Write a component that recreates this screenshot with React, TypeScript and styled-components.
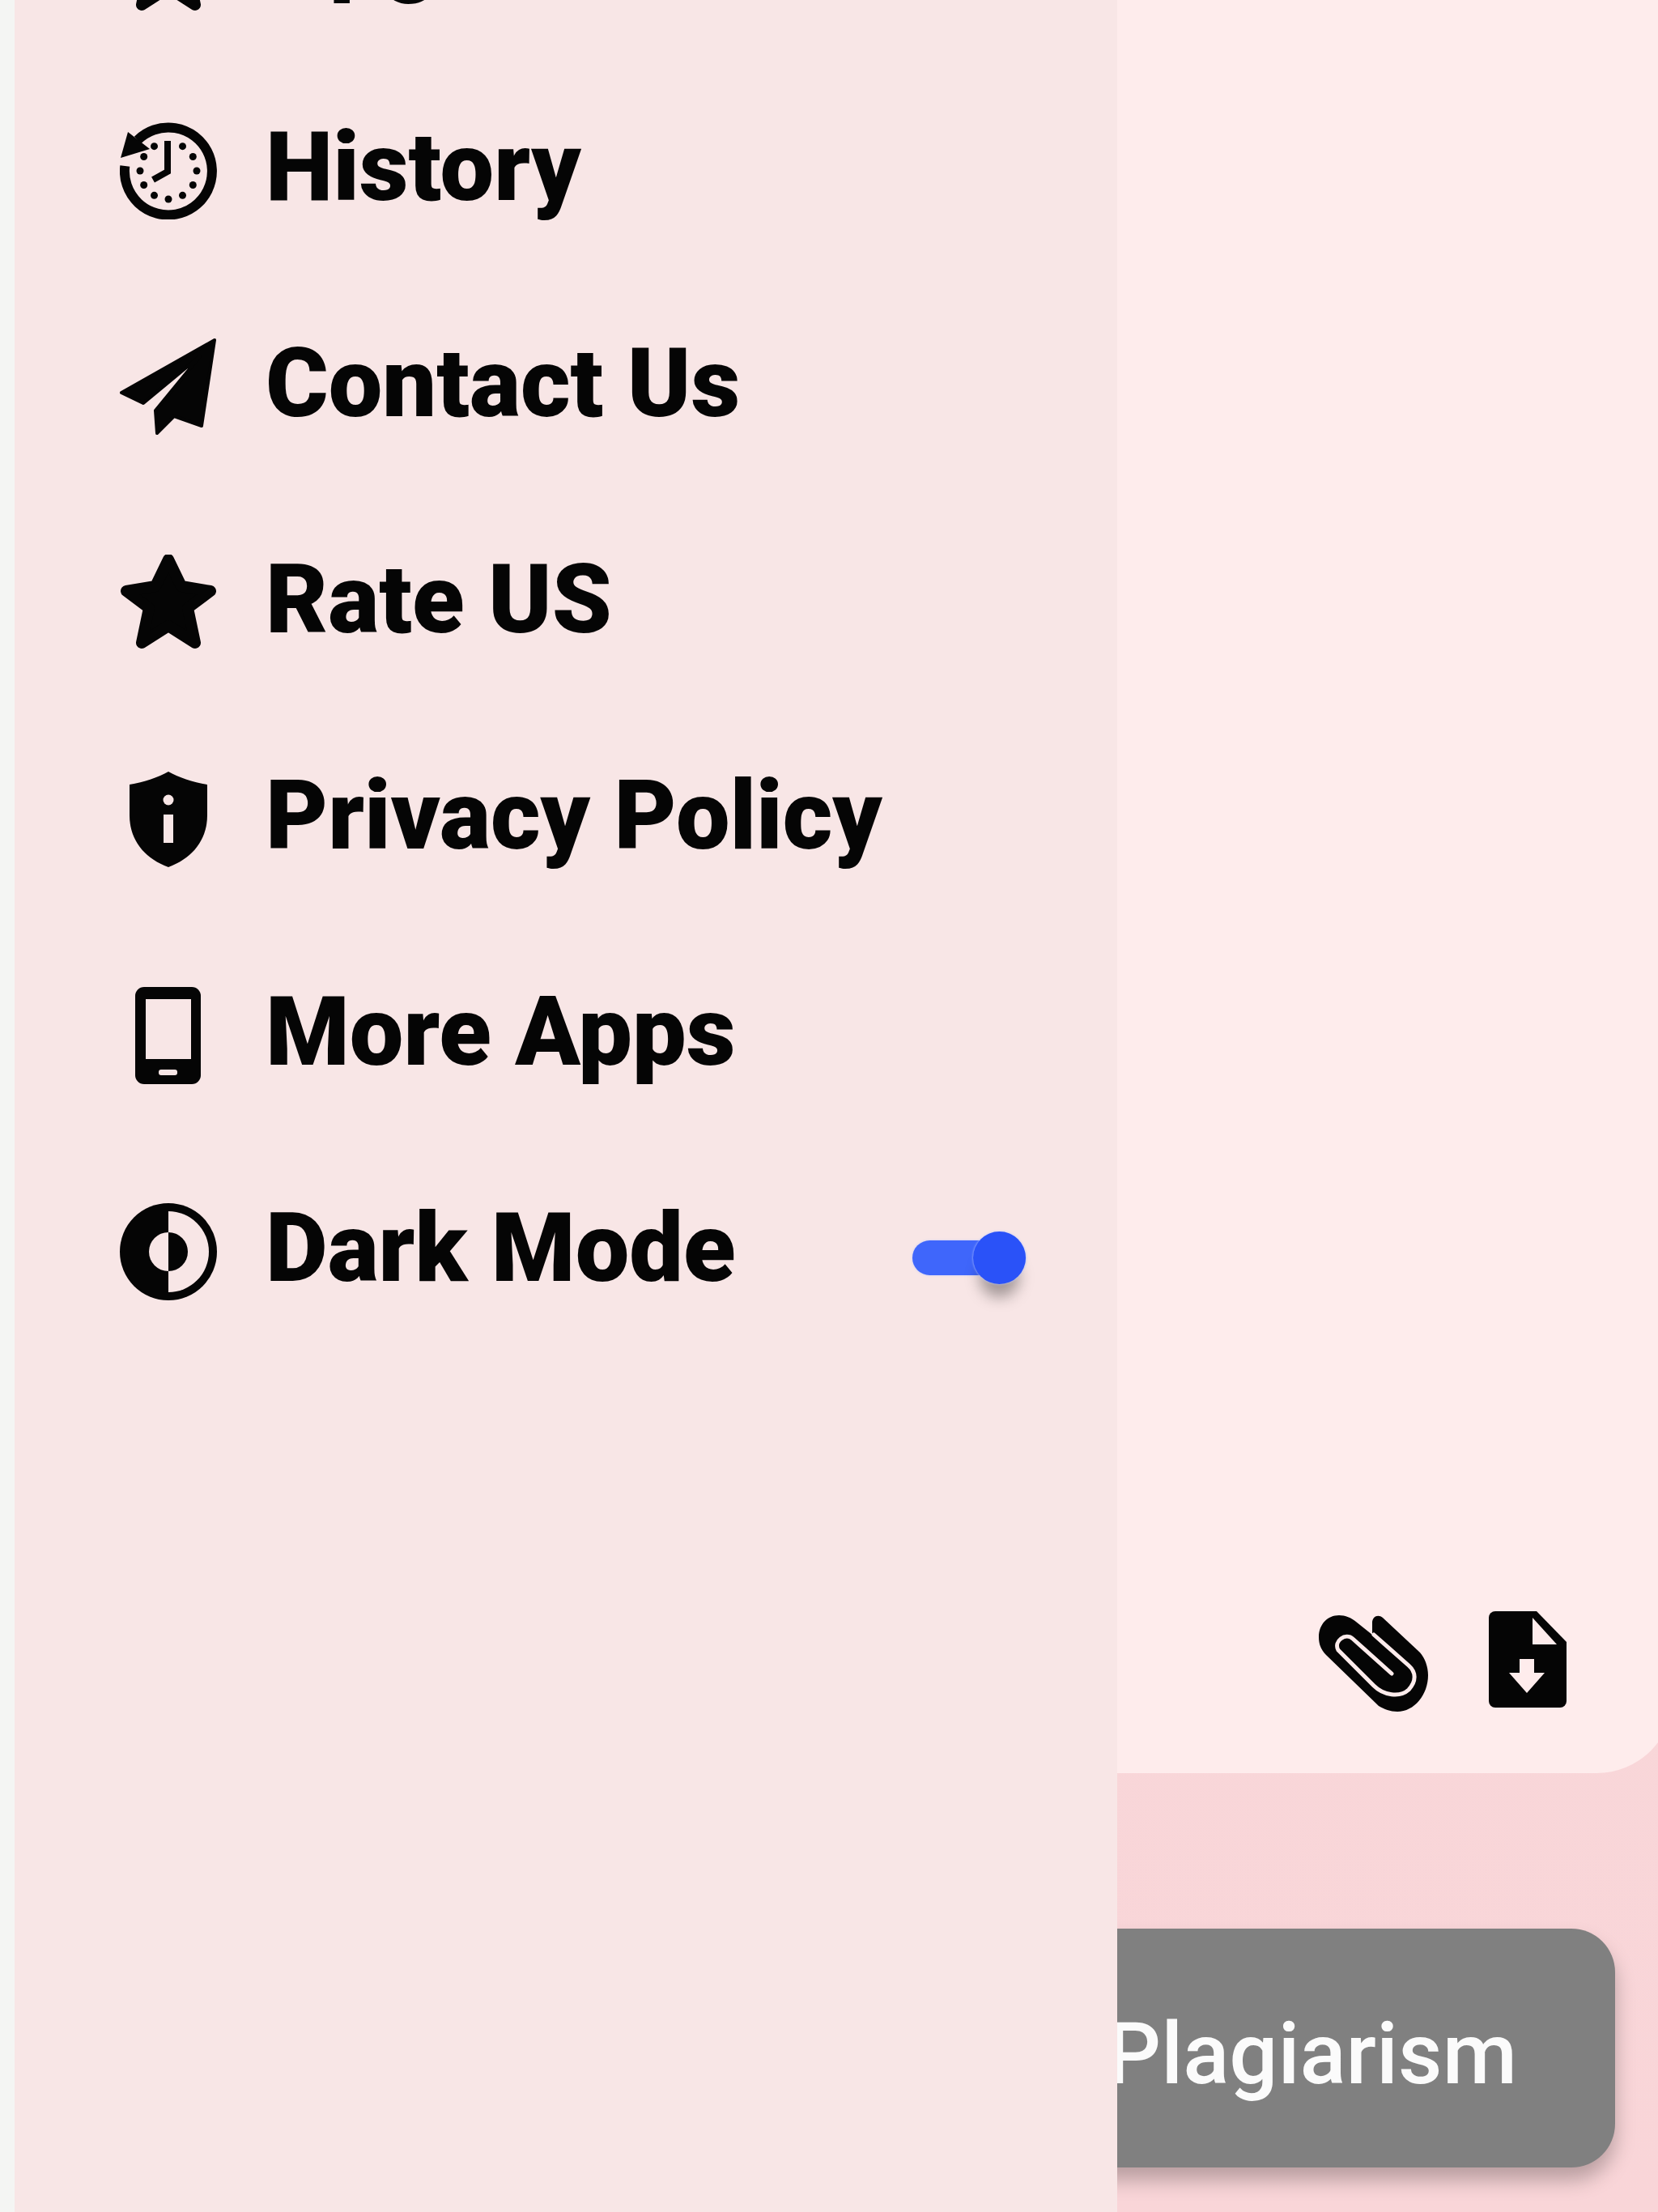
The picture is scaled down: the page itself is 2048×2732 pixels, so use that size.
import React from 'react'
import styled, { createGlobalStyle } from 'styled-components'

const GlobalStyle = createGlobalStyle`
  html, body {
    margin: 0;
    padding: 0;
    background: #f4f5f3;
  }
`

function HistoryIcon() {
  const dots = Array.from({ length: 12 }, (_, i) => i * 30).filter((deg) => deg !== 0)
  return (
    <svg viewBox="0 -2 120 120" width="120" height="120">
      <path d="M6.3 52 A54 54 0 1 0 22 20" fill="none" stroke="#050505" strokeWidth="12" />
      <polygon points="10,10 37,31 1,42" fill="#050505" />
      {dots.map((deg) => (
        <circle
          key={deg}
          cx={60 + 35 * Math.sin((deg * Math.PI) / 180)}
          cy={58 - 35 * Math.cos((deg * Math.PI) / 180)}
          r="4.5"
          fill="#050505"
        />
      ))}
      <path d="M59 21 V59 L41 69" fill="none" stroke="#050505" strokeWidth="8" />
    </svg>
  )
}

function PlaneIcon() {
  return (
    <svg viewBox="0 0 120 120" width="120" height="120">
      <path
        d="M117 2 L2 67 L29 80 L99 22 L44 89 L46 117 L67 96 L101 108 Z"
        fill="#050505"
        stroke="#050505"
        strokeWidth="4"
        strokeLinejoin="round"
      />
    </svg>
  )
}

function StarIcon() {
  return (
    <svg viewBox="0 2 120 120" width="120" height="120">
      <path
        d="M60 8 L76 41 L112 47 L84 68 L93 111 L60 90 L27 111 L36 68 L8 47 L44 41 Z"
        fill="#050505"
        stroke="#050505"
        strokeWidth="14"
        strokeLinejoin="round"
      />
    </svg>
  )
}

function ShieldIcon() {
  return (
    <svg viewBox="0 0 120 120" width="120" height="120">
      <path
        d="M60 1 C72 8 90 14 108 17 V55 C108 85 90 108 60 119 C30 108 12 85 12 55 V17 C30 14 48 8 60 1 Z"
        fill="#050505"
      />
      <circle cx="60" cy="36" r="6.5" fill="#f8e6e6" />
      <rect x="54" y="54" width="12" height="35" fill="#f8e6e6" />
    </svg>
  )
}

function PhoneIcon() {
  return (
    <svg viewBox="0 0 120 120" width="120" height="120">
      <rect x="19" y="0" width="81" height="120" rx="11" fill="#050505" />
      <rect x="32" y="15" width="56" height="74" fill="#f8e6e6" />
      <rect x="48" y="102" width="23" height="7" rx="3" fill="#f8e6e6" />
    </svg>
  )
}

function ContrastIcon() {
  return (
    <svg viewBox="0 0 120 120" width="120" height="120">
      <circle cx="60" cy="60" r="60" fill="#050505" />
      <path d="M60 10 A50 50 0 0 1 60 110 Z" fill="#f8e6e6" />
      <path d="M60 36 A24 24 0 0 1 60 84 Z" fill="#050505" />
      <path d="M60 36 A24 24 0 0 0 60 84 Z" fill="#f8e6e6" />
    </svg>
  )
}

function ClipIcon() {
  return (
    <svg viewBox="0 0 135 119" width="135" height="119">
      <path
        d="M0 27 C0 11 11 0 25 0 C33 0 40 3 46 8 L66 24 V9 C66 2 73 -2 79 3 L125 46 C131 53 135 63 135 74 C135 98 118 119 97 119 C88 119 81 116 74 112 L9 49 C3 43 0 36 0 27 Z"
        fill="#050505"
      />
      <path
        d="M90 72 L42 29 C33 21 18 32 24 43 L68 87 C80 99 100 102 111 92 C121 81 120 70 111 62 L68 24"
        fill="none"
        stroke="#feecec"
        strokeWidth="5"
        strokeLinecap="round"
      />
    </svg>
  )
}

function FileIcon() {
  return (
    <svg viewBox="0 0 96 119" width="96" height="119">
      <path
        d="M8 0 H59 L96 38 V111 A8 8 0 0 1 88 119 H8 A8 8 0 0 1 0 111 V8 A8 8 0 0 1 8 0 Z"
        fill="#050505"
      />
      <path d="M54 8 L84 41 H54 Z" fill="#feecec" />
      <path d="M38 59 H56 V76 H69 L47 101 L25 76 H38 Z" fill="#feecec" />
    </svg>
  )
}

function App() {
  return (
    <Screen>
      <GlobalStyle />
      <Strip />
      <Drawer>
        <MenuRow>
          <TopIconSlot><StarIcon /></TopIconSlot>
          <MenuLabel>Upgrade</MenuLabel>
        </MenuRow>
        <MenuRow>
          <IconSlot><HistoryIcon /></IconSlot>
          <MenuLabel>History</MenuLabel>
        </MenuRow>
        <MenuRow>
          <IconSlot><PlaneIcon /></IconSlot>
          <MenuLabel>Contact Us</MenuLabel>
        </MenuRow>
        <MenuRow>
          <IconSlot><StarIcon /></IconSlot>
          <MenuLabel>Rate US</MenuLabel>
        </MenuRow>
        <MenuRow>
          <IconSlot><ShieldIcon /></IconSlot>
          <MenuLabel>Privacy Policy</MenuLabel>
        </MenuRow>
        <MenuRow>
          <IconSlot><PhoneIcon /></IconSlot>
          <MenuLabel>More Apps</MenuLabel>
        </MenuRow>
        <MenuRow>
          <IconSlot><ContrastIcon /></IconSlot>
          <MenuLabel>Dark Mode</MenuLabel>
          <Toggle>
            <ToggleTrack />
            <ToggleThumb />
          </Toggle>
        </MenuRow>
      </Drawer>
      <Content>
        <Card>
          <CardTools>
            <ClipSlot><ClipIcon /></ClipSlot>
            <FileIcon />
          </CardTools>
        </Card>
        <ButtonRow>
          <CheckButton>Plagiarism</CheckButton>
        </ButtonRow>
      </Content>
    </Screen>
  )
}

export default App

const Screen = styled.div`
  width: 2048px;
  height: 2732px;
  display: flex;
  overflow: hidden;
  background: #f4f5f3;
  font-family: Roboto, 'Liberation Sans', sans-serif;
`

const Strip = styled.div`
  width: 18px;
  flex-shrink: 0;
`

const Drawer = styled.div`
  width: 1362px;
  height: 2732px;
  flex-shrink: 0;
  background: #f8e6e6;
  display: flex;
  flex-direction: column;
  gap: 147px;
  padding: 0 113px 0 130px;
  box-sizing: border-box;
  overflow: hidden;

  & > :first-child {
    margin-top: -116px;
  }
`

const MenuRow = styled.div`
  height: 120px;
  display: flex;
  align-items: center;
  gap: 60px;
  flex-shrink: 0;
`

const IconSlot = styled.div`
  width: 120px;
  height: 120px;
  flex-shrink: 0;
  display: flex;
`

const TopIconSlot = styled(IconSlot)`
  align-self: flex-start;
  margin-top: 13px;
`

const MenuLabel = styled.span`
  font-size: 118.5px;
  font-weight: 900;
  color: #050505;
  line-height: 120px;
  white-space: nowrap;
  margin-bottom: 8px;
`

const Toggle = styled.div`
  margin-left: auto;
  position: relative;
  width: 140px;
  height: 65px;
  flex-shrink: 0;
  margin-top: 14px;
`

const ToggleTrack = styled.div`
  position: absolute;
  left: 0;
  top: 11px;
  width: 100%;
  height: 43px;
  border-radius: 22px;
  background: #3f66fb;
  box-shadow: 0 0 3px #b9c7fd;
`

const ToggleThumb = styled.div`
  position: absolute;
  right: 0;
  top: 0;
  width: 65px;
  height: 65px;
  border-radius: 50%;
  background: #2a52f8;
  box-shadow: 0 0 3px #b9c7fd, 0 24px 18px -8px rgba(0, 0, 0, 0.35);
`

const Content = styled.div`
  flex: 1;
  min-width: 0;
  display: flex;
  flex-direction: column;
  overflow: hidden;
  background: linear-gradient(180deg, #f7dadb 0%, #f9d5d8 100%);
`

const Card = styled.div`
  height: 2190px;
  flex-shrink: 0;
  margin-right: -19px;
  background: #feecec;
  border-bottom-right-radius: 95px;
  box-sizing: border-box;
  display: flex;
  align-items: flex-end;
  justify-content: flex-end;
  padding: 0 132px 76px 0;
`

const CardTools = styled.div`
  display: flex;
  align-items: flex-start;
  gap: 75px;
`

const ClipSlot = styled.div`
  display: flex;
  margin-top: 5px;
`

const ButtonRow = styled.div`
  display: flex;
  justify-content: flex-end;
  padding: 192px 53px 0 0;
`

const CheckButton = styled.div`
  width: 900px;
  height: 295px;
  flex-shrink: 0;
  box-sizing: border-box;
  padding: 14px 121px 0 0;
  background: #808080;
  border-radius: 54px;
  box-shadow: 0 16px 24px rgba(0, 0, 0, 0.26);
  color: #fbfbfb;
  font-size: 106px;
  font-weight: 500;
  display: flex;
  align-items: center;
  justify-content: flex-end;
`
